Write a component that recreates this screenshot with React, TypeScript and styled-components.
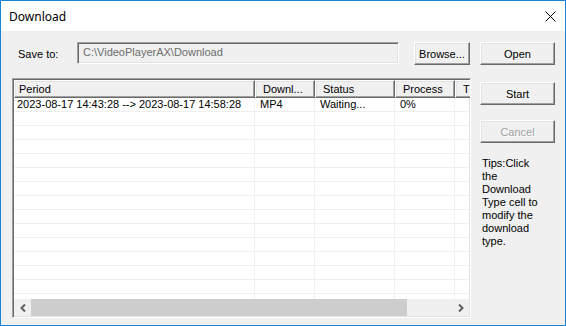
import styled, { createGlobalStyle, css } from 'styled-components';

const GlobalStyle = createGlobalStyle`
  html, body {
    margin: 0;
    padding: 0;
    background: #ffffff;
  }
  body {
    font-family: "Liberation Sans", Arial, sans-serif;
    font-size: 11px;
    color: #000000;
  }
`;

const columns = [
  { title: 'Period', width: 241, first: true },
  { title: 'Downl...', width: 60 },
  { title: 'Status', width: 80 },
  { title: 'Process', width: 60 },
  { title: 'T', width: 80 },
];

const rows = [
  ['2023-08-17 14:43:28 --> 2023-08-17 14:58:28', 'MP4', 'Waiting...', '0%', ''],
];

const EMPTY_ROWS = 14;

const raised = css`
  border: 1px solid;
  border-color: #ffffff #696969 #696969 #ffffff;
  box-shadow: inset -1px -1px #a0a0a0, inset 1px 1px #e3e3e3;
`;

const sunken = css`
  border: 1px solid;
  border-color: #a0a0a0 #ffffff #ffffff #a0a0a0;
  box-shadow: inset 1px 1px #696969, inset -1px -1px #e3e3e3;
`;

const Window = styled.div`
  width: 566px;
  height: 326px;
  box-sizing: border-box;
  border: 1px solid #1883d7;
  background: #f0f0f0;
  display: flex;
  flex-direction: column;
  overflow: hidden;
`;

const TitleBar = styled.div`
  height: 30px;
  flex: none;
  background: #ffffff;
  display: flex;
  align-items: center;
  justify-content: space-between;
  padding: 0 9px 0 8px;
`;

const Title = styled.span`
  font-family: "Noto Sans", "Liberation Sans", sans-serif;
  font-size: 12px;
  color: #000000;
`;

const Body = styled.div`
  flex: 1;
  display: flex;
  gap: 9px;
  padding: 11px 0 0 11px;
`;

const LeftPane = styled.div`
  width: 459px;
  display: flex;
  flex-direction: column;
`;

const SaveRow = styled.div`
  height: 23px;
  display: flex;
  align-items: center;
  padding-left: 6px;
`;

const SaveLabel = styled.span`
  width: 59px;
`;

const PathBox = styled.div`
  ${sunken};
  box-sizing: border-box;
  width: 322px;
  height: 22px;
  align-self: flex-start;
  background: #f0f0f0;
  color: #6d6d6d;
  padding-left: 5px;
  line-height: 19px;
  white-space: nowrap;
`;

const Button = styled.button<{ $width?: number; $gap?: number }>`
  ${raised};
  box-sizing: border-box;
  width: ${p => p.$width ?? 75}px;
  height: 23px;
  margin: ${p => p.$gap ?? 0}px 0 0 0;
  padding: 0;
  background: #f0f0f0;
  font-family: "Liberation Sans", Arial, sans-serif;
  font-size: 11px;
  color: #000000;
  flex: none;

  &:disabled {
    color: #a0a0a0;
    text-shadow: 1px 1px #ffffff;
  }
`;

const BrowseButton = styled(Button)`
  margin-left: 15px;
`;

const ListView = styled.div`
  ${sunken};
  box-sizing: border-box;
  margin-top: 13px;
  height: 240px;
  background: #ffffff;
  display: flex;
  flex-direction: column;
  overflow: hidden;
  padding: 1px;
`;

const HeaderRow = styled.div`
  display: flex;
  height: 18px;
  flex: none;
`;

const HeaderCell = styled.div<{ $width: number; $first?: boolean }>`
  ${raised};
  box-sizing: border-box;
  width: ${p => p.$width}px;
  flex: none;
  background: #f0f0f0;
  padding-left: ${p => (p.$first ? 4 : 7)}px;
  line-height: 16px;
  white-space: nowrap;
  overflow: hidden;
`;

const Rows = styled.div`
  flex: 1;
  overflow: hidden;
`;

const Row = styled.div`
  display: flex;
  height: 14px;
`;

const Cell = styled.div<{ $width: number; $first?: boolean }>`
  box-sizing: border-box;
  width: ${p => p.$width}px;
  flex: none;
  border-right: 1px solid #f0f0f0;
  border-bottom: 1px solid #f0f0f0;
  padding-left: ${p => (p.$first ? 3 : 5)}px;
  line-height: 13px;
  white-space: nowrap;
  overflow: hidden;
`;

const ScrollBar = styled.div`
  display: flex;
  height: 17px;
  flex: none;
  background: #f0f0f0;
`;

const ArrowButton = styled.div`
  width: 17px;
  flex: none;
  display: flex;
  align-items: center;
  justify-content: center;
`;

const Thumb = styled.div<{ $width: number }>`
  width: ${p => p.$width}px;
  flex: none;
  background: #cdcdcd;
`;

const Track = styled.div`
  flex: 1;
`;

const RightPane = styled.div`
  width: 75px;
  display: flex;
  flex-direction: column;
`;

const Tips = styled.div`
  width: 60px;
  margin-top: 14px;
  padding-left: 2px;
  line-height: 13px;
`;

function Chevron({ dir }: { dir: 'left' | 'right' }) {
  const d = dir === 'left' ? 'M5 0.5 L1.5 4 L5 7.5' : 'M1 0.5 L4.5 4 L1 7.5';
  return (
    <svg width="6" height="8" viewBox="0 0 6 8">
      <path d={d} fill="none" stroke="#606060" strokeWidth="2" />
    </svg>
  );
}

function CloseIcon() {
  return (
    <svg width="11" height="11" viewBox="0 0 11 11">
      <path d="M0.5 0.5 L10.5 10.5 M10.5 0.5 L0.5 10.5" stroke="#000000" strokeWidth="1" />
    </svg>
  );
}

export default function App() {
  const filler = Array.from({ length: EMPTY_ROWS }, () => columns.map(() => ''));
  const allRows = rows.concat(filler);

  return (
    <>
      <GlobalStyle />
      <Window>
        <TitleBar>
          <Title>Download</Title>
          <CloseIcon />
        </TitleBar>
        <Body>
          <LeftPane>
            <SaveRow>
              <SaveLabel>Save to:</SaveLabel>
              <PathBox>C:\VideoPlayerAX\Download</PathBox>
              <BrowseButton $width={56}>Browse...</BrowseButton>
            </SaveRow>
            <ListView>
              <HeaderRow>
                {columns.map(col => (
                  <HeaderCell key={col.title} $width={col.width} $first={col.first}>
                    {col.title}
                  </HeaderCell>
                ))}
              </HeaderRow>
              <Rows>
                {allRows.map((row, i) => (
                  <Row key={i}>
                    {row.map((value, j) => (
                      <Cell key={j} $width={columns[j].width} $first={columns[j].first}>
                        {value}
                      </Cell>
                    ))}
                  </Row>
                ))}
              </Rows>
              <ScrollBar>
                <ArrowButton><Chevron dir="left" /></ArrowButton>
                <Thumb $width={376} />
                <Track />
                <ArrowButton><Chevron dir="right" /></ArrowButton>
              </ScrollBar>
            </ListView>
          </LeftPane>
          <RightPane>
            <Button>Open</Button>
            <Button $gap={17}>Start</Button>
            <Button $gap={15} disabled>Cancel</Button>
            <Tips>Tips:Click the Download Type cell to modify the download type.</Tips>
          </RightPane>
        </Body>
      </Window>
    </>
  );
}
